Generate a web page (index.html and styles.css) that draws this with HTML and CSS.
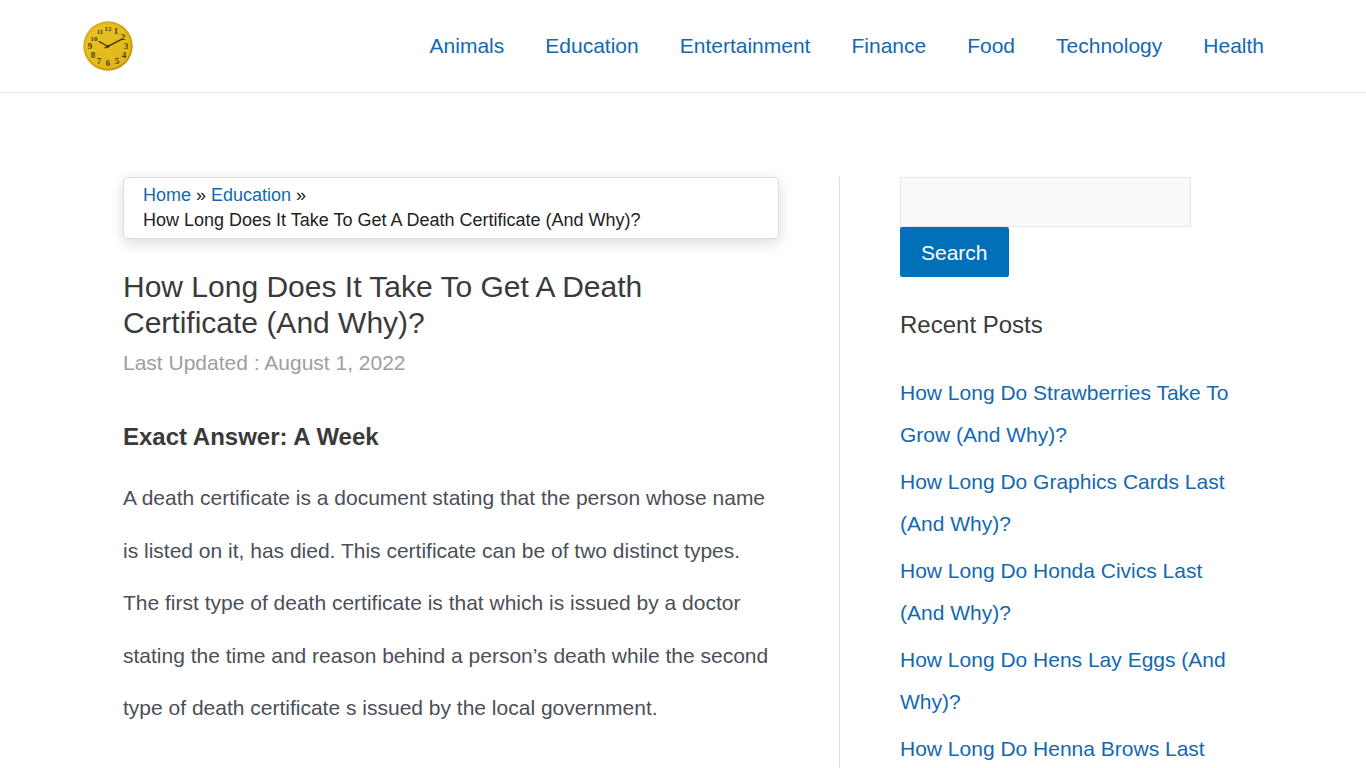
FILE: index.html
```html
<!DOCTYPE html>
<html lang="en">
<head>
    <meta charset="UTF-8">
    <meta name="viewport" content="width=device-width, initial-scale=1.0">
    <title>How Long Does It Take To Get A Death Certificate (And Why)?</title>
    <link rel="stylesheet" href="styles.css">
</head>
<body>
  <header class="site-header">
    <div class="container header-inner">
      <a class="logo" href="#" aria-label="Home">
        <svg width="50" height="50" viewBox="0 0 50 50">
          <defs>
            <linearGradient id="rim" x1="0" y1="0" x2="1" y2="1">
              <stop offset="0" stop-color="#dcb520"/>
              <stop offset="1" stop-color="#c08f10"/>
            </linearGradient>
            <linearGradient id="face" x1="0" y1="0" x2="1" y2="1">
              <stop offset="0" stop-color="#e8c425"/>
              <stop offset="1" stop-color="#e0b416"/>
            </linearGradient>
          </defs>
          <circle cx="25" cy="25" r="24.7" fill="url(#rim)"/>
          <circle cx="25" cy="25" r="22.8" fill="url(#face)"/>
          <g class="numerals">
            <text class="small" x="25" y="10">12</text>
            <text x="33" y="13">1</text>
            <text x="40" y="19">2</text>
            <text x="43" y="28">3</text>
            <text x="41" y="37">4</text>
            <text x="34" y="43">5</text>
            <text x="25" y="45">6</text>
            <text x="16" y="43">7</text>
            <text x="10" y="37">8</text>
            <text x="7" y="28">9</text>
            <text class="small" x="11" y="20">10</text>
            <text class="small" x="17" y="13">11</text>
          </g>
          <path d="M25 25.5 16 20.5M22 26.8 39 18.2" fill="none" stroke="#3b3108" stroke-width="1.3" stroke-linecap="round"/>
          <circle cx="25" cy="25.3" r="1.4" fill="#3b3108"/>
        </svg>
      </a>
      <nav class="main-nav">
        <a href="#">Animals</a>
        <a href="#">Education</a>
        <a href="#">Entertainment</a>
        <a href="#">Finance</a>
        <a href="#">Food</a>
        <a href="#">Technology</a>
        <a href="#">Health</a>
      </nav>
    </div>
  </header>

  <div class="container content">
    <main class="primary">
      <nav class="breadcrumbs" aria-label="Breadcrumbs">
        <a href="#">Home</a> » <a href="#">Education</a> »<br>
        <span>How Long Does It Take To Get A Death Certificate (And Why)?</span>
      </nav>

      <article>
        <h1>How Long Does It Take To Get A Death Certificate (And Why)?</h1>
        <p class="updated">Last Updated : August 1, 2022</p>
        <h2>Exact Answer: A Week</h2>
        <p class="text">A death certificate is a document stating that the person whose name is listed on it, has died. This certificate can be of two distinct types. The first type of death certificate is that which is issued by a doctor stating the time and reason behind a person’s death while the second type of death certificate s issued by the local government.</p>
      </article>
    </main>

    <aside class="sidebar">
      <form class="search" role="search">
        <input type="search" name="s" aria-label="Search">
        <button type="submit">Search</button>
      </form>
      <h2>Recent Posts</h2>
      <ul>
        <li><a href="#">How Long Do Strawberries Take To Grow (And Why)?</a></li>
        <li><a href="#">How Long Do Graphics Cards Last (And Why)?</a></li>
        <li><a href="#">How Long Do Honda Civics Last (And Why)?</a></li>
        <li><a href="#">How Long Do Hens Lay Eggs (And Why)?</a></li>
        <li><a href="#">How Long Do Henna Brows Last</a></li>
      </ul>
    </aside>
  </div>
</body>
</html>
```
FILE: styles.css
```css
* {
  box-sizing: border-box;
}
body {
  margin: 0;
  font-family: "Liberation Sans", Arial, sans-serif;
  font-size: 21px;
  color: #4b4f58;
  background-color: #fff;
}
a {
  color: #1468b0;
  text-decoration: none;
}
a:hover {
  color: #3a3a3a;
}
h1, h2, p, ul {
  margin: 0;
  padding: 0;
}
.container {
  max-width: 1240px;
  margin: 0 auto;
  padding: 0 20px;
}

.site-header {
  border-bottom: 1px solid #e6e6e6;
}
.header-inner {
  display: flex;
  align-items: center;
  justify-content: space-between;
  min-height: 92px;
}
.logo svg {
  display: block;
}
.numerals {
  font-family: "Liberation Serif", serif;
  font-size: 9px;
  font-weight: bold;
  text-anchor: middle;
  fill: #4a3c08;
}
.numerals .small {
  font-size: 7px;
}
.main-nav {
  display: flex;
  gap: 41px;
  padding-right: 19px;
}

.content {
  display: flex;
  padding-top: 84px;
}
.primary {
  width: 63%;
  padding: 0 60px 0 40px;
}
.breadcrumbs {
  padding: 5px 19px;
  border: 1px solid #dcdcdc;
  border-radius: 4px;
  box-shadow: 0 4px 14px rgba(0, 0, 0, 0.14);
  font-size: 18px;
  line-height: 25px;
  color: #222;
}
h1 {
  margin-top: 30px;
  font-size: 30px;
  font-weight: normal;
  line-height: 36px;
  color: #3a3a3a;
}
.updated {
  line-height: 44px;
  color: #9e9e9e;
}
.primary h2 {
  margin-top: 37px;
  font-size: 24px;
  line-height: 30px;
  color: #3a3a3a;
}
.text {
  margin-top: 20px;
  line-height: 2.5;
}

.sidebar {
  width: 37%;
  padding: 0 40px 0 60px;
  border-left: 1px solid #ddd;
}
.search {
  display: flex;
  flex-direction: column;
  align-items: flex-start;
}
.search input {
  width: 291px;
  max-width: 100%;
  height: 50px;
  padding: 0 12px;
  border: 1px solid #e6e6e6;
  border-radius: 0;
  background-color: #fafafa;
  font: inherit;
}
.search button {
  height: 50px;
  padding: 2px 21px 0;
  border: none;
  border-radius: 2px;
  background-color: #0170b9;
  color: #fff;
  font: inherit;
  cursor: pointer;
}
.sidebar h2 {
  margin: 30px 0 29px;
  font-size: 24px;
  font-weight: normal;
  line-height: 36px;
  color: #3a3a3a;
}
.sidebar ul {
  list-style: none;
}
.sidebar li {
  margin-bottom: 5px;
  line-height: 42px;
}
```
